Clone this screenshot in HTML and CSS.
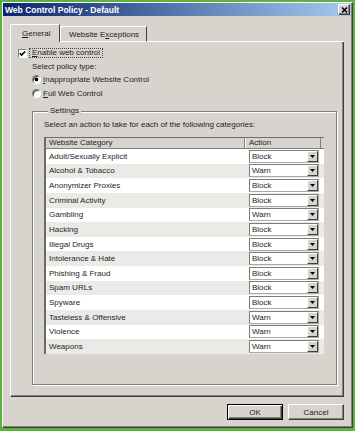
FILE: index.html
```html
<!DOCTYPE html>
<html lang="en">

<head>
    <meta charset="UTF-8">
    <meta name="viewport" content="width=device-width, initial-scale=1.0">
    <title>Web Control Policy - Default</title>
    <link rel="stylesheet" href="styles.css">
</head>

<body>
    <div class="window">
        <div class="titlebar">
            <span class="title">Web Control Policy - Default</span>
            <span class="close">
                <svg width="7" height="6" viewBox="0 0 8 7"><path d="M1 0.5L7 6.5M7 0.5L1 6.5" stroke="#000" stroke-width="1.7" fill="none"/></svg>
            </span>
        </div>

        <div class="tabs">
            <div class="tab tab-active"><u>G</u>eneral</div>
            <div class="tab">Website E<u>x</u>ceptions</div>
            <div class="tab-fill"></div>
        </div>

        <div class="panel">
            <div class="check-row">
                <span class="checkbox">
                    <svg width="7" height="7" viewBox="0 0 7 7"><path d="M0.8 3.2L2.6 5.1L6.2 1.4" stroke="#000" stroke-width="1.5" fill="none"/></svg>
                </span>
                <span class="focus"><u>E</u>nable web control</span>
            </div>
            <div class="policy-label">Select policy type:</div>
            <div class="radio-row">
                <span class="radio radio-on"></span>
                <span><u>I</u>nappropriate Website Control</span>
            </div>
            <div class="radio-row radio-row-2">
                <span class="radio"></span>
                <span><u>F</u>ull Web Control</span>
            </div>

            <div class="group">
                <span class="group-title">Settings</span>
                <div class="hint">Select an action to take for each of the following categories:</div>
                <div class="list">
                    <div class="list-head">
                        <div class="head-cat">Website Category</div>
                        <div class="head-act">Action</div>
                    </div>
                    <div class="row">
                        <div class="cat">Adult/Sexually Explicit</div>
                        <div class="act"><div class="select"><span class="select-val">Block</span><span class="select-btn"><svg width="5" height="3" viewBox="0 0 5 3"><path d="M0 0H5L2.5 3Z"/></svg></span></div></div>
                    </div>
                    <div class="row row-alt">
                        <div class="cat">Alcohol &amp; Tobacco</div>
                        <div class="act"><div class="select"><span class="select-val">Warn</span><span class="select-btn"><svg width="5" height="3" viewBox="0 0 5 3"><path d="M0 0H5L2.5 3Z"/></svg></span></div></div>
                    </div>
                    <div class="row">
                        <div class="cat">Anonymizer Proxies</div>
                        <div class="act"><div class="select"><span class="select-val">Block</span><span class="select-btn"><svg width="5" height="3" viewBox="0 0 5 3"><path d="M0 0H5L2.5 3Z"/></svg></span></div></div>
                    </div>
                    <div class="row row-alt">
                        <div class="cat">Criminal Activity</div>
                        <div class="act"><div class="select"><span class="select-val">Block</span><span class="select-btn"><svg width="5" height="3" viewBox="0 0 5 3"><path d="M0 0H5L2.5 3Z"/></svg></span></div></div>
                    </div>
                    <div class="row">
                        <div class="cat">Gambling</div>
                        <div class="act"><div class="select"><span class="select-val">Warn</span><span class="select-btn"><svg width="5" height="3" viewBox="0 0 5 3"><path d="M0 0H5L2.5 3Z"/></svg></span></div></div>
                    </div>
                    <div class="row row-alt">
                        <div class="cat">Hacking</div>
                        <div class="act"><div class="select"><span class="select-val">Block</span><span class="select-btn"><svg width="5" height="3" viewBox="0 0 5 3"><path d="M0 0H5L2.5 3Z"/></svg></span></div></div>
                    </div>
                    <div class="row">
                        <div class="cat">Illegal Drugs</div>
                        <div class="act"><div class="select"><span class="select-val">Block</span><span class="select-btn"><svg width="5" height="3" viewBox="0 0 5 3"><path d="M0 0H5L2.5 3Z"/></svg></span></div></div>
                    </div>
                    <div class="row row-alt">
                        <div class="cat">Intolerance &amp; Hate</div>
                        <div class="act"><div class="select"><span class="select-val">Block</span><span class="select-btn"><svg width="5" height="3" viewBox="0 0 5 3"><path d="M0 0H5L2.5 3Z"/></svg></span></div></div>
                    </div>
                    <div class="row">
                        <div class="cat">Phishing &amp; Fraud</div>
                        <div class="act"><div class="select"><span class="select-val">Block</span><span class="select-btn"><svg width="5" height="3" viewBox="0 0 5 3"><path d="M0 0H5L2.5 3Z"/></svg></span></div></div>
                    </div>
                    <div class="row row-alt">
                        <div class="cat">Spam URLs</div>
                        <div class="act"><div class="select"><span class="select-val">Block</span><span class="select-btn"><svg width="5" height="3" viewBox="0 0 5 3"><path d="M0 0H5L2.5 3Z"/></svg></span></div></div>
                    </div>
                    <div class="row">
                        <div class="cat">Spyware</div>
                        <div class="act"><div class="select"><span class="select-val">Block</span><span class="select-btn"><svg width="5" height="3" viewBox="0 0 5 3"><path d="M0 0H5L2.5 3Z"/></svg></span></div></div>
                    </div>
                    <div class="row row-alt">
                        <div class="cat">Tasteless &amp; Offensive</div>
                        <div class="act"><div class="select"><span class="select-val">Warn</span><span class="select-btn"><svg width="5" height="3" viewBox="0 0 5 3"><path d="M0 0H5L2.5 3Z"/></svg></span></div></div>
                    </div>
                    <div class="row">
                        <div class="cat">Violence</div>
                        <div class="act"><div class="select"><span class="select-val">Warn</span><span class="select-btn"><svg width="5" height="3" viewBox="0 0 5 3"><path d="M0 0H5L2.5 3Z"/></svg></span></div></div>
                    </div>
                    <div class="row row-alt">
                        <div class="cat">Weapons</div>
                        <div class="act"><div class="select"><span class="select-val">Warn</span><span class="select-btn"><svg width="5" height="3" viewBox="0 0 5 3"><path d="M0 0H5L2.5 3Z"/></svg></span></div></div>
                    </div>
                </div>
            </div>
        </div>

        <div class="buttons">
            <button class="btn btn-default">OK</button>
            <button class="btn">Cancel</button>
        </div>
    </div>
</body>

</html>
```

FILE: styles.css
```css
* {
    box-sizing: border-box;
}

body {
    margin: 0;
    background-color: #5ab43c;
    font-family: "Liberation Sans", Arial, sans-serif;
    font-size: 8px;
    color: #1e1e1e;
}

u {
    text-decoration: underline;
    text-underline-offset: 1px;
}

.window {
    margin: 2px 0 0 2px;
    width: 351px;
    height: 426px;
    padding: 0 1px 1px 0;
    background-color: #d7d4ce;
    border: 1px solid;
    border-color: #fff #404040 #404040 #fff;
    box-shadow: inset -1px -1px 0 #808080;
    display: flex;
    flex-direction: column;
}

.titlebar {
    height: 13px;
    padding: 0 1px 0 2px;
    background: linear-gradient(to right, #0a246a, #a6caf0);
    display: flex;
    align-items: center;
    justify-content: space-between;
}

.title {
    color: #fff;
    font-weight: bold;
    font-size: 8.5px;
}

.close {
    width: 12px;
    height: 11px;
    background-color: #d7d4ce;
    border: 1px solid;
    border-color: #fff #404040 #404040 #fff;
    box-shadow: inset -1px -1px 0 #808080;
    display: flex;
    align-items: center;
    justify-content: center;
}

/* tabs */

.tabs {
    height: 18px;
    margin: 8px 7px 0 7px;
    display: flex;
    align-items: flex-end;
}

.tab {
    height: 16px;
    padding-left: 8px;
    line-height: 15px;
    border-top: 1px solid #fff;
    border-left: 1px solid #fff;
    border-right: 1px solid #404040;
    border-bottom: 1px solid #fff;
    width: 87px;
}

.tab-active {
    height: 18px;
    width: 50px;
    padding-left: 11px;
    line-height: 17px;
    border-bottom: none;
}

.tab-fill {
    flex: 1;
    height: 1px;
    background-color: #fff;
}

/* general page */

.panel {
    height: 355px;
    margin: 0 7px;
    padding: 5px 6px 0 7px;
    border-left: 1px solid #fff;
    border-right: 1px solid #404040;
    border-bottom: 1px solid #404040;
    box-shadow: inset -1px -1px 0 #808080;
}

.check-row {
    height: 12px;
    display: flex;
    align-items: center;
}

.checkbox {
    width: 9px;
    height: 9px;
    margin-right: 2px;
    background-color: #fff;
    border: 1px solid;
    border-color: #808080 #fff #fff #808080;
    display: flex;
    align-items: center;
    justify-content: center;
}

.focus {
    height: 10px;
    padding: 0 2px;
    line-height: 8px;
    border: 1px dotted #444;
}

.policy-label {
    height: 12px;
    margin-top: 2px;
    margin-left: 14px;
    line-height: 12px;
}

.radio-row {
    height: 12px;
    margin-left: 14px;
    display: flex;
    align-items: center;
    gap: 2px;
}

.radio-row-2 {
    margin-top: 2px;
}

.radio {
    width: 9px;
    height: 9px;
    border-radius: 50%;
    background-color: #fff;
    border: 1px solid;
    border-color: #808080 #fff #fff #808080;
    box-shadow: inset 1px 1px 0 #404040;
}

.radio-on {
    background: radial-gradient(circle, #000 1.6px, #fff 2.2px);
}

/* settings group */

.group {
    height: 274px;
    margin: 12px 0 0 14px;
    padding: 0 12px 0 11px;
    border: 1px solid #808080;
    box-shadow: 1px 1px 0 #fff, inset 1px 1px 0 #fff;
}

.group-title {
    display: block;
    width: max-content;
    margin: -6px 0 0 4px;
    padding: 0 2px;
    line-height: 10px;
    background-color: #d7d4ce;
}

.hint {
    height: 12px;
    margin-top: 3px;
    line-height: 12px;
}

.list {
    width: 280px;
    margin-top: 6px;
    background-color: #fff;
    border-top: 1px solid #6a6a6a;
    border-left: 2px solid #6a6a6a;
}

.list-head {
    height: 11px;
    display: flex;
    background-color: #d7d4ce;
    border-bottom: 1px solid #808080;
    line-height: 9px;
}

.head-cat {
    width: 199px;
    padding-left: 3px;
    border-right: 1px solid #808080;
}

.head-act {
    width: 76px;
    padding-left: 3px;
    border-left: 1px solid #fff;
    border-right: 1px solid #808080;
}

.row {
    height: 14.64px;
    display: flex;
    align-items: center;
}

.row-alt {
    background-color: #eceae6;
}

.cat {
    width: 199px;
    padding-left: 3px;
}

.act {
    padding-left: 4px;
}

.select {
    width: 70px;
    height: 13px;
    background-color: #fff;
    border: 1px solid;
    border-color: #7c7c7c #a8a8a8 #a8a8a8 #7c7c7c;
    display: flex;
    align-items: center;
    justify-content: space-between;
}

.select-val {
    padding-left: 2px;
}

.select-btn {
    width: 11px;
    height: 11px;
    background-color: #d7d4ce;
    border: 1px solid;
    border-color: #fff #404040 #404040 #fff;
    display: flex;
    align-items: center;
    justify-content: center;
}

/* dialog buttons */

.buttons {
    margin: 7px 7px 0 0;
    display: flex;
    justify-content: flex-end;
    gap: 5px;
}

.btn {
    width: 56px;
    height: 16px;
    padding: 0;
    font-family: "Liberation Sans", Arial, sans-serif;
    font-size: 8px;
    color: #1e1e1e;
    background-color: #d7d4ce;
    border: 1px solid;
    border-color: #fff #404040 #404040 #fff;
    box-shadow: inset -1px -1px 0 #808080;
}

.btn-default {
    border-color: #000;
    box-shadow: inset 1px 1px 0 #fff, inset -1px -1px 0 #404040, inset -2px -2px 0 #808080;
}
```
